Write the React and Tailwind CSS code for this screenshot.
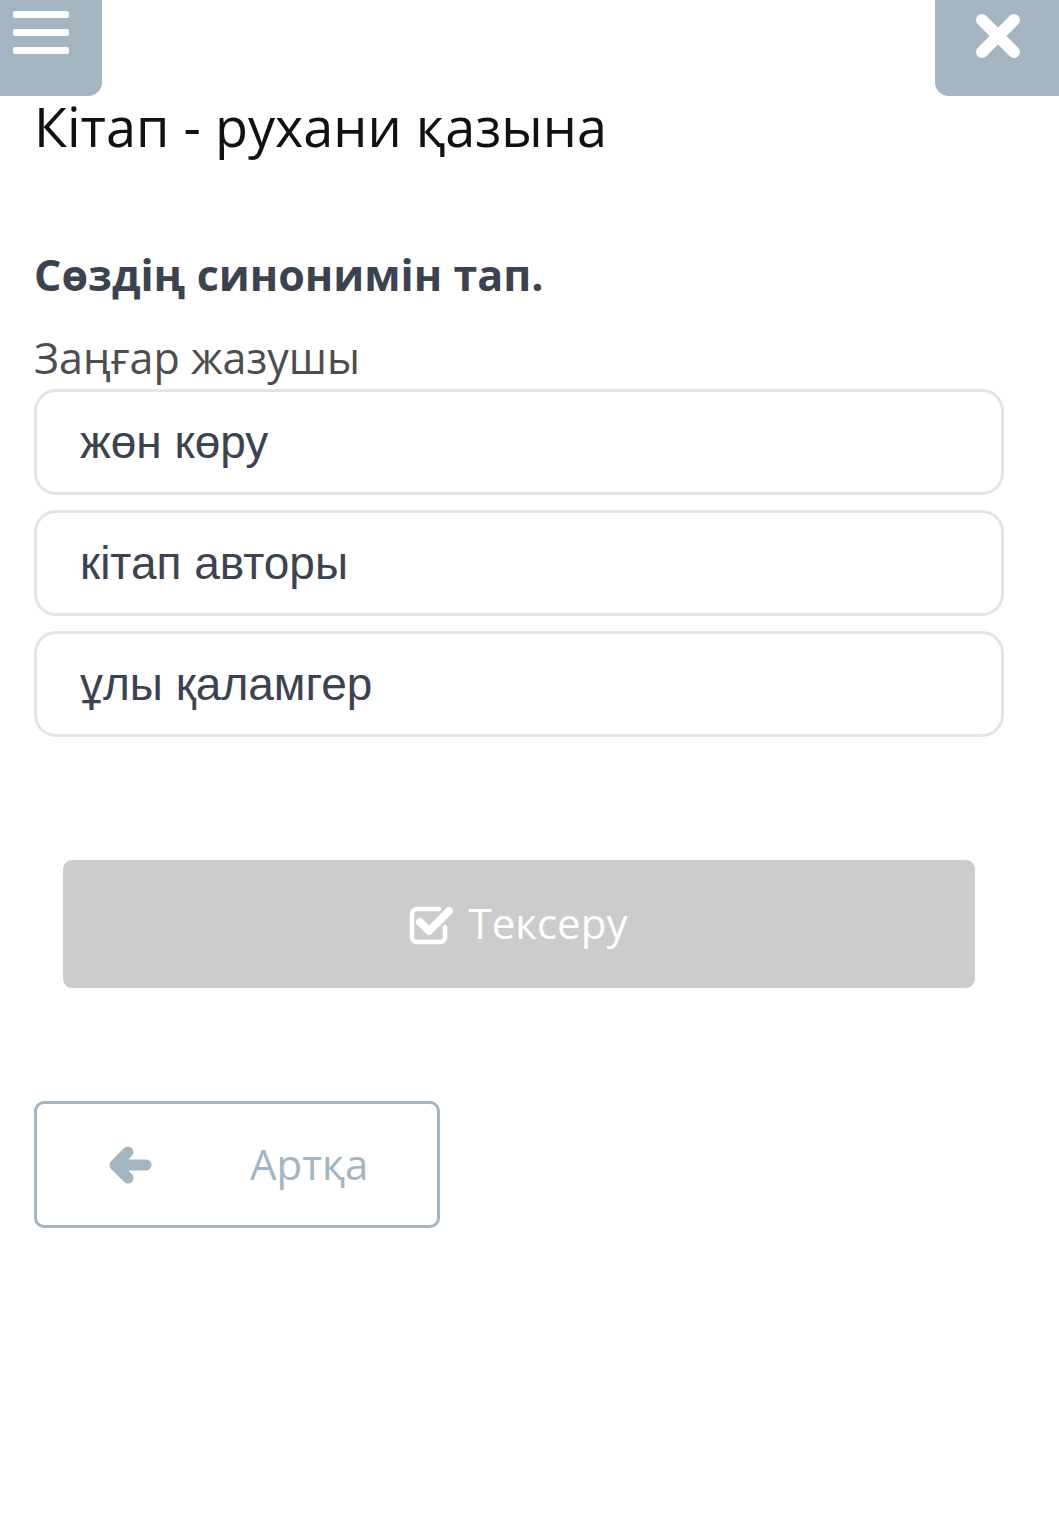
import React from 'react';

const options = ['жөн көру', 'кітап авторы', 'ұлы қаламгер'];

const CheckSquare = () => (
    <svg width="46" height="42" viewBox="0 0 46 42" fill="none">
        <path d="M30 6 H8 a5 5 0 0 0 -5 5 V34 a5 5 0 0 0 5 5 H31 a5 5 0 0 0 5 -5 V24" stroke="white" strokeWidth="4.5" strokeLinecap="round" />
        <path d="M11 19 L20 28 L40 8" stroke="white" strokeWidth="8" strokeLinecap="round" strokeLinejoin="round" />
    </svg>
);

const CloseIcon = () => (
    <svg width="46" height="46" viewBox="0 0 46 46">
        <path d="M7 7 L39 39 M39 7 L7 39" stroke="white" strokeWidth="12" strokeLinecap="round" />
    </svg>
);

const ArrowLeft = () => (
    <svg width="44" height="38" viewBox="0 0 44 38" fill="none">
        <path d="M20 6 L7 19 L20 32 M8 19 H38" stroke="#a2b5c1" strokeWidth="11" strokeLinecap="round" strokeLinejoin="round" />
    </svg>
);

export default function App() {
    return (
        <div className="min-h-[1514px] bg-white" style={{ fontFamily: '"Open Sans", sans-serif' }}>
            {/* Top bar */}
            <div className="flex justify-between h-[96px]">
                <button className="w-[102px] h-[96px] bg-[#a2b5c1] rounded-br-[14px] flex flex-col gap-[11px] pt-[11px] pl-[13px]">
                    <span className="block w-[56px] h-[7px] bg-white rounded-[2px]"></span>
                    <span className="block w-[56px] h-[7px] bg-white rounded-[2px]"></span>
                    <span className="block w-[56px] h-[7px] bg-white rounded-[2px]"></span>
                </button>
                <button className="w-[124px] h-[96px] bg-[#a2b5c1] rounded-bl-[14px] flex items-start justify-center pt-[13px] pl-[1px]">
                    <CloseIcon />
                </button>
            </div>

            <div className="px-[34px]">
                <h1 className="text-[54px] leading-[60px] text-[#111111] font-normal">Кітап - рухани қазына</h1>

                <h2 className="mt-[95px] text-[43px] leading-[48px] font-bold text-[#3c4350]">Сөздің синонимін тап.</h2>

                <p className="mt-[35px] text-[43px] leading-[48px] text-[#4d4d4d]">Заңғар жазушы</p>

                <div className="mt-[7px] flex flex-col gap-[15px] w-[970px]">
                    {options.map((o) => (
                        <div
                            key={o}
                            className="h-[106px] border-[3px] border-[#e3e4e6] rounded-[22px] flex items-center pl-[43px] text-[46px] text-[#3c4350]"
                            style={{ fontFamily: '"Liberation Sans", Arial, sans-serif' }}
                        >
                            {o}
                        </div>
                    ))}
                </div>

                <div className="mt-[123px] ml-[29px] w-[912px] h-[128px] bg-[#cccccc] rounded-[9px] flex items-center justify-center gap-[14px] pr-[2px]">
                    <CheckSquare />
                    <span className="text-[42px] text-white leading-none pb-[2px]">Тексеру</span>
                </div>

                <div className="mt-[113px] w-[406px] h-[127px] border-[3px] border-[#a2b5c1] rounded-[10px] flex items-center">
                    <span className="ml-[71px]"><ArrowLeft /></span>
                    <span className="ml-[98px] text-[42px] text-[#a2b5c1] leading-none pb-[2px]">Артқа</span>
                </div>
            </div>
        </div>
    );
}
